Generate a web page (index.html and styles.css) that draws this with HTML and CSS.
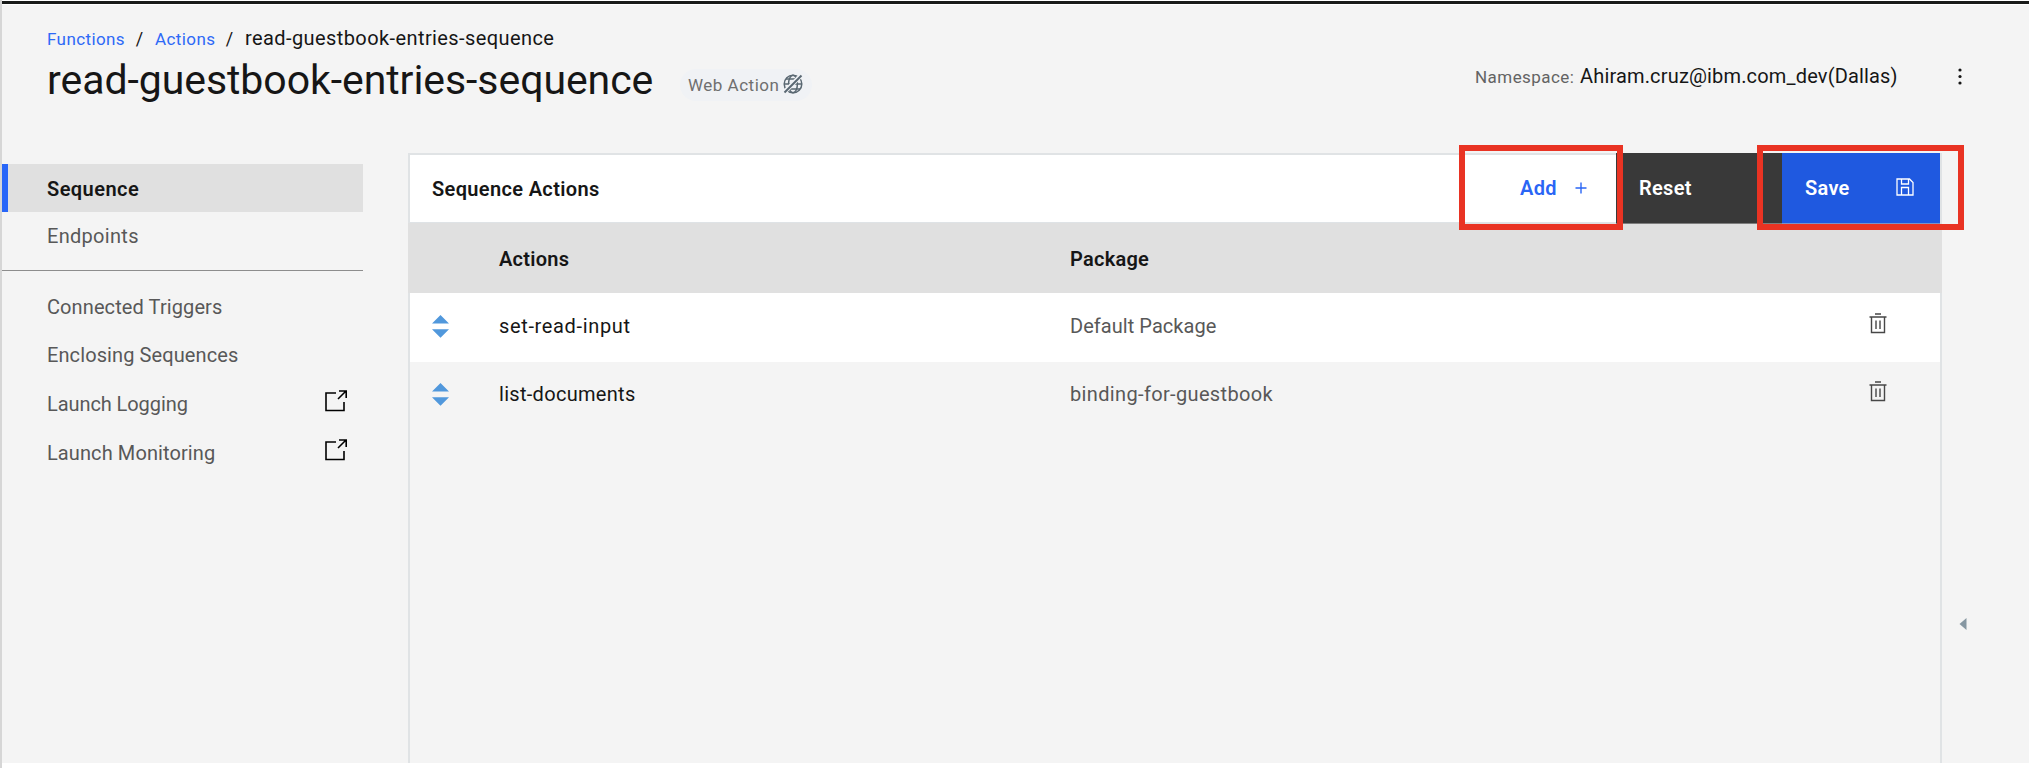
FILE: index.html
```html
<!DOCTYPE html>
<html lang="en">
<head>
<meta charset="utf-8">
<title>read-guestbook-entries-sequence</title>
<link rel="stylesheet" href="styles.css">
</head>
<body>
<div class="app">
  <header class="header">
    <div class="heading">
      <nav class="crumbs"><a class="link-functions">Functions</a><span class="sep">/</span><a class="link-actions">Actions</a><span class="sep">/</span><span class="current">read-guestbook-entries-sequence</span></nav>
      <div class="title-row">
        <h1 class="title">read-guestbook-entries-sequence</h1>
        <div class="tag"><span>Web Action</span>
          <svg class="globe" width="20" height="20" viewBox="0 0 20 20" fill="none" stroke="#5a6872" stroke-width="1.5"><circle cx="10" cy="10" r="8.8"/><ellipse cx="10" cy="10" rx="4.4" ry="8.8"/><path d="M1.5 10h17M3 5h14M3 15h14"/><path d="M1 18.5 18.5 1" stroke="#f0f2f5" stroke-width="4.500"/><path d="M1.5 18.5 18.5 1.5" stroke-width="2"/></svg>
        </div>
      </div>
    </div>
    <div class="account"><span class="ns">Namespace:</span><span class="ns-value">Ahiram.cruz@ibm.com_dev(Dallas)</span>
      <svg class="dots" width="4" height="17" viewBox="0 0 4 17" fill="#161616"><circle cx="2" cy="2" r="1.6"/><circle cx="2" cy="8.5" r="1.6"/><circle cx="2" cy="15" r="1.6"/></svg>
    </div>
  </header>
  <div class="body">
    <aside class="sidebar">
      <a class="item active">Sequence</a>
      <a class="item endpoints">Endpoints</a>
      <hr class="divider">
      <a class="item">Connected Triggers</a>
      <a class="item">Enclosing Sequences</a>
      <a class="item launch"><span class="logging">Launch Logging</span><svg class="open" width="22" height="22" viewBox="0 0 22 22" fill="none" stroke="#000" stroke-width="1.6"><path d="M11 3H1v17.500h18V12M13 9l8-8M14 1h7.200v7"/></svg></a>
      <a class="item launch"><span>Launch Monitoring</span><svg class="open" width="22" height="22" viewBox="0 0 22 22" fill="none" stroke="#000" stroke-width="1.6"><path d="M11 3H1v17.500h18V12M13 9l8-8M14 1h7.200v7"/></svg></a>
    </aside>
    <main class="panel">
      <div class="toolbar">
        <h2 class="panel-title">Sequence Actions</h2>
        <div class="buttons">
          <button class="btn add"><span>Add</span><svg width="12" height="12" viewBox="0 0 12 12" stroke="#2a65f5" stroke-width="1.4"><path d="M6 .5v11M.5 6h11"/></svg><i class="mark mark-add"></i></button>
          <button class="btn reset">Reset</button>
          <button class="btn save"><span>Save</span><svg width="18" height="18" viewBox="0 0 18 18" fill="none" stroke="#fff" stroke-width="1.3"><path d="M1 1h12.500L17 4.500V17H1zM5.500 1v5h7V1M5.500 17v-7.500h7V17"/></svg><i class="mark mark-save"></i></button>
        </div>
      </div>
      <div class="row head"><span></span><span>Actions</span><span>Package</span><span></span></div>
      <div class="row first">
        <svg class="sort" width="17" height="23" viewBox="0 0 17 23" fill="#5198dc"><path d="M8.500 0 17 8.500H0zM0 14.300h17L8.500 22.800z"/></svg>
        <span class="name wide">set-read-input</span><span class="pkg">Default Package</span>
        <svg class="trash" width="18" height="21" viewBox="0 0 18 21" fill="none" stroke="#474747" stroke-width="1.4"><path d="M6 1h6M.5 4h17M2.500 4v15.500h13V4M7 7.500v8.500M11 7.500v8.500"/></svg>
      </div>
      <div class="row second">
        <svg class="sort" width="17" height="23" viewBox="0 0 17 23" fill="#5198dc"><path d="M8.500 0 17 8.500H0zM0 14.300h17L8.500 22.800z"/></svg>
        <span class="name">list-documents</span><span class="pkg binding">binding-for-guestbook</span>
        <svg class="trash" width="18" height="21" viewBox="0 0 18 21" fill="none" stroke="#474747" stroke-width="1.4"><path d="M6 1h6M.5 4h17M2.500 4v15.500h13V4M7 7.500v8.500M11 7.500v8.500"/></svg>
      </div>
    </main>
    <div class="rail"><svg width="8" height="12" viewBox="0 0 8 12" fill="#8697a2"><path d="M7.500 0v12L.5 6z"/></svg></div>
  </div>
</div>
</body>
</html>
```
FILE: styles.css
```css
* { box-sizing: border-box; }
body {
  margin: 0;
  height: 768px;
  overflow: hidden;
  background: #fff;
  border-left: 2px solid #d6d6d6;
  font: 20px/24px Roboto, "Liberation Sans", sans-serif;
  color: #161616;
}
.app {
  margin-top: 1px;
  width: 2027px;
  height: 762px;
  border-top: 3px solid #191b1a;
  background: #f4f4f4;
  box-shadow: inset 0 1px #fff;
  display: flex;
  flex-direction: column;
}
.header {
  height: 149px;
  flex: none;
  display: flex;
  justify-content: space-between;
}
.heading { padding: 22px 0 0 45px; }
.crumbs { height: 24px; display: flex; align-items: baseline; }
.crumbs a { font-size: 17px; color: #2e69f7; letter-spacing: .4px; }
.link-functions { width: 77px; }
.link-actions { width: 59px; }
.sep { width: 31px; text-align: center; font-size: 18px; }
.current { letter-spacing: .41px; }
.title-row { display: flex; height: 50px; margin-top: 6px; }
.title { margin: -1px 0 0; width: 633px; font-size: 41px; line-height: 50px; font-weight: 400; white-space: nowrap; letter-spacing: -.06px; }
.tag {
  display: flex;
  align-items: center;
  gap: 4px;
  margin-top: 13px;
  height: 32px;
  width: 132px;
  padding-left: 8px;
  border-radius: 16px;
  background: #f0f2f5;
  color: #6f6f6f;
  font-size: 17px;
  letter-spacing: .5px;
  white-space: nowrap;
}
.tag span { width: 91px; }
.globe { flex: none; margin-top: -3px; }
.account { display: flex; align-items: baseline; padding: 60px 67px 0 0; height: 90px; }
.ns { width: 105px; font-size: 17px; color: #636363; letter-spacing: .45px; }
.ns-value { width: 378px; letter-spacing: .16px; }
.dots { align-self: flex-start; margin-top: 4px; }
.body { flex: 1; display: flex; min-height: 0; }
.sidebar { width: 361px; margin-right: 45px; padding-top: 11px; }
.item {
  display: flex;
  align-items: center;
  height: 48px;
  padding-left: 45px;
  color: #585858;
  letter-spacing: .1px;
}
.active {
  padding-left: 39px;
  border-left: 6px solid #2866f8;
  background: #e0e0e0;
  color: #161616;
  font-weight: 600;
  letter-spacing: .45px;
  padding-top: 1px;
}
.endpoints { letter-spacing: .3px; }
.divider { height: 0; margin: 10px 0 12px; border: 0; border-top: 1px solid #8d8d8d; }
.launch { height: 49px; justify-content: space-between; padding-right: 16px; }
.logging { letter-spacing: -.08px; }
.open { margin-top: -6px; }
.panel { width: 1534px; border: 2px solid #e0e3e5; border-bottom: 0; }
.toolbar {
  height: 68px;
  display: flex;
  justify-content: space-between;
  background: #fff;
  border-bottom: 1px solid #dfe3e6;
}
.panel-title { margin: 0; padding-left: 22px; font-size: 20px; line-height: 69px; height: 67px; font-weight: 600; letter-spacing: .35px; }
.buttons { display: flex; height: 71px; margin-top: -2px; }
.btn {
  position: relative;
  display: flex;
  align-items: center;
  border: 0;
  padding: 0 0 0 23px;
  font: 600 20px/24px Roboto, "Liberation Sans", sans-serif;
  letter-spacing: .3px;
  color: #fff;
}
.add { width: 157px; padding-left: 61px; padding-bottom: 1px; gap: 18px; background: transparent; color: #2a65f5; }
.reset { width: 166px; background: #393939; border-bottom: 1px solid #7d7d7d; }
.save { width: 158px; background: #1f59e0; justify-content: space-between; padding-right: 26px; border-bottom: 1px solid #7d93c8; }
.save svg { margin-top: -3px; }
.mark { position: absolute; z-index: 2; top: -8px; height: 85px; border: 6px solid #e93323; }
.mark-add { left: 0; width: 164px; }
.mark-save { left: -25px; width: 207px; }
.row {
  display: grid;
  grid-template-columns: 67px 571px 1fr 71px;
  align-items: center;
  height: 68px;
  padding: 0 0 3px 22px;
  letter-spacing: .05px;
}
.head { height: 70px; padding: 1px 0 0 24px; background: #e0e0e0; font-weight: 600; margin: 0 -2px; letter-spacing: .25px; }
.first { height: 69px; background: #fff; }
.second { padding-bottom: 4px; }
.name { color: #161616; letter-spacing: .3px; }
.wide { letter-spacing: .65px; }
.pkg { color: #585858; }
.binding { letter-spacing: .35px; }
.trash { margin-top: -6px; }
.rail { padding: 465px 0 0 17px; }
.rail svg { display: block; }
```
